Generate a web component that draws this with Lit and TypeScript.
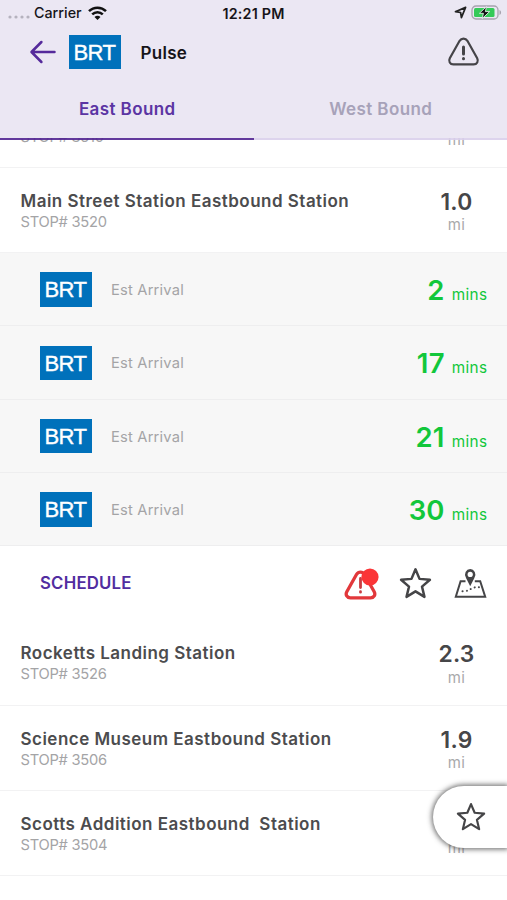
import { LitElement, html, css, svg } from "lit";
import { customElement, property } from "lit/decorators.js";

interface Stop {
  name: string;
  id: string;
  miles: string;
}

const starPath = "M16 2.2 L19.9 11.5 L30 12.4 L22.3 19 L24.7 29 L16 23.6 L7.3 29 L9.7 19 L2 12.4 L12.1 11.5 Z";
const trianglePath = "M12.6 3.8 C14.4 .9 18.6 .9 20.4 3.8 L30.2 21.2 C31.8 24.2 30 27.4 26.6 27.4 L6.4 27.4 C3 27.4 1.2 24.2 2.8 21.2 Z";

@customElement("route-badge")
class RouteBadge extends LitElement {
  static styles = css`
    :host {
      display: block;
      width: 51.5px;
      height: 34.5px;
      flex: none;
      background: #0071bb;
      color: #fff;
      font: 22px/36px "Liberation Sans", Arial, sans-serif;
      text-align: center;
      -webkit-text-stroke: 0.4px #fff;
      letter-spacing: -0.6px;
      text-indent: -0.6px;
    }
  `;
  render() {
    return html`BRT`;
  }
}

@customElement("stop-row")
class StopRow extends LitElement {
  @property({ attribute: false }) stop!: Stop;

  static styles = css`
    :host {
      display: flex;
      justify-content: space-between;
      box-sizing: border-box;
      height: 85.25px;
      padding: 23px 0 0 20.5px;
      border-bottom: 1px solid #f2f2f3;
      background: #fff;
    }
    .name {
      min-height: 21px;
      font-size: 17px;
      font-weight: 600;
      line-height: 21px;
      letter-spacing: 0.48px;
      color: #4c4c4e;
      white-space: pre;
    }
    .id {
      font-size: 14.7px;
      line-height: 20px;
      letter-spacing: -0.25px;
      color: #a4a4a6;
    }
    .distance {
      width: 101px;
      text-align: center;
    }
    .miles {
      min-height: 22px;
      font-size: 22.8px;
      font-weight: 600;
      line-height: 22px;
      letter-spacing: 0.2px;
      color: #464648;
    }
    .unit {
      font-size: 15px;
      line-height: 22px;
      letter-spacing: 0.4px;
      color: #a9a9ab;
      padding-top: 1.5px;
    }
  `;
  render() {
    return html`
      <div>
        <div class="name">${this.stop.name}</div>
        <div class="id">STOP# ${this.stop.id}</div>
      </div>
      <div class="distance">
        <div class="miles">${this.stop.miles}</div>
        <div class="unit">mi</div>
      </div>
    `;
  }
}

@customElement("arrival-row")
class ArrivalRow extends LitElement {
  @property() minutes = "";

  static styles = css`
    :host {
      display: flex;
      align-items: center;
      box-sizing: border-box;
      height: 73.3px;
      padding: 1px 19.5px 0 40px;
      border-bottom: 1px solid #eeeeef;
      background: #f7f7f7;
    }
    .label {
      margin-left: 19.5px;
      padding-top: 1px;
      flex: 1;
      font-size: 14.7px;
      letter-spacing: 0.2px;
      color: #a4a4a6;
    }
    .time {
      display: flex;
      align-items: baseline;
      gap: 7px;
      padding-top: 1px;
      color: #12c73b;
    }
    .minutes {
      font-size: 27.5px;
      font-weight: 600;
      letter-spacing: 0.2px;
    }
    .unit {
      font-size: 15.3px;
      font-weight: 400;
      letter-spacing: 0.4px;
    }
  `;
  render() {
    return html`
      <route-badge></route-badge>
      <div class="label">Est Arrival</div>
      <div class="time">
        <span class="minutes">${this.minutes}</span>
        <span class="unit">mins</span>
      </div>
    `;
  }
}

@customElement("app-root")
class AppRoot extends LitElement {
  static styles = css`
    :host {
      display: block;
      position: relative;
      width: 507px;
      height: 900px;
      overflow: hidden;
      background: #fff;
      font-family: Inter, "Noto Sans", sans-serif;
    }
    svg {
      display: block;
      flex: none;
    }
    .header {
      position: relative;
      z-index: 1;
      height: 140px;
      box-sizing: border-box;
    }
    .status {
      display: grid;
      grid-template-columns: 1fr auto 1fr;
      align-items: center;
      height: 26px;
      padding: 0 7px 0 8px;
      background: #ebe7f3;
      font-size: 14.3px;
      font-weight: 500;
      color: #161419;
    }
    .clock {
      font-weight: 600;
      letter-spacing: 0.2px;
      margin-right: 1px;
    }
    .carrier {
      display: flex;
      align-items: center;
      margin-top: -1px;
    }
    .carrier span {
      margin: 0 6px 0 4px;
    }
    .power {
      display: flex;
      justify-content: flex-end;
      align-items: center;
      gap: 4px;
      margin: -1px -1.5px 0 0;
    }
    .bar {
      display: flex;
      align-items: center;
      height: 52px;
      padding: 0 27px 0 29px;
      background: #ebe7f3;
    }
    .title {
      flex: 1;
      margin-left: 20px;
      padding-top: 1px;
      font-size: 17px;
      font-weight: 600;
      letter-spacing: 0.3px;
      color: #161419;
    }
    .bar route-badge {
      margin-left: 12px;
    }
    .tabs {
      display: grid;
      grid-template-columns: 1fr 1fr;
      height: 62px;
    }
    .tab {
      box-sizing: border-box;
      height: 62px;
      padding-left: 1px;
      text-align: center;
      font-size: 17px;
      font-weight: 600;
      line-height: 62.5px;
      letter-spacing: 0.4px;
      color: #a7a2b9;
      background: #ebe7f3;
      background-clip: padding-box;
      border-bottom: 2px solid #d9cfebe6;
    }
    .tab.active {
      color: #5b35a3;
      border-bottom-color: #512391e6;
    }
    .list {
      margin-top: -57.5px;
    }
    .actions {
      display: flex;
      align-items: center;
      height: 74.2px;
      padding: 0 20px 0 40px;
    }
    .schedule {
      flex: 1;
      font-size: 16.8px;
      font-weight: 600;
      color: #512da0;
      letter-spacing: 0.2px;
    }
    .icons {
      display: flex;
      align-items: center;
      gap: 22px;
    }
    .icons svg:first-child {
      margin-right: -2px;
    }
    .favorites {
      position: absolute;
      right: 0;
      top: 786px;
      width: 74px;
      height: 62px;
      box-sizing: border-box;
      padding: 16px 0 0 23px;
      border-radius: 31px 0 0 31px;
      background: #fff;
      box-shadow: 0 0 5px 1.5px #444b;
      z-index: 1;
    }
  `;

  private stopsBefore: Stop[] = [
    { name: "", id: "3510", miles: "" },
    { name: "Main Street Station Eastbound Station", id: "3520", miles: "1.0" },
  ];

  private stopsAfter: Stop[] = [
    { name: "Rocketts Landing Station", id: "3526", miles: "2.3" },
    { name: "Science Museum Eastbound Station", id: "3506", miles: "1.9" },
    { name: "Scotts Addition Eastbound  Station", id: "3504", miles: "" },
  ];

  private star(size: number, width: number) {
    return html`<svg width=${size} height=${size} viewBox="0 0 32 32" fill="none" stroke="#454547" stroke-width=${width} stroke-linejoin="round">
      ${svg`<path d=${starPath} />`}
    </svg>`;
  }

  render() {
    return html`
      <div class="header">
        <div class="status">
          <div class="carrier">
            <svg width="22" height="12" viewBox="0 0 22 12" fill="#b5b2be">
              <circle cx="2" cy="10" r="1.6" /><circle cx="8" cy="10" r="1.6" />
              <circle cx="14" cy="10" r="1.6" /><circle cx="20" cy="10" r="1.6" />
            </svg>
            <span>Carrier</span>
            <svg width="19" height="14" viewBox="0 0 19 14" fill="none" stroke="#111" stroke-width="2.5">
              <path d="M1 5.2 C5.7 .6 13.3 .6 18 5.2" />
              <path d="M4.2 8.4 C7.2 5.5 11.8 5.5 14.8 8.4" />
              <path d="M9.5 14 L6.5 11 C8.2 9.4 10.8 9.4 12.5 11 Z" fill="#111" stroke="none" />
            </svg>
          </div>
          <div class="clock">12:21 PM</div>
          <div class="power">
            <svg width="13" height="13" viewBox="0 0 13 13" fill="none" stroke="#222" stroke-width="1.7" stroke-linejoin="round">
              <path d="M11.6 1.4 L1.4 5.7 L6.6 6.5 L7.4 11.6 Z" />
            </svg>
            <svg width="31" height="15" viewBox="0 0 31 15">
              <rect x="1" y="1" width="26" height="13" rx="4" fill="none" stroke="#a7a3ae" stroke-width="1.3" />
              <rect x="3" y="3" width="20.5" height="9" rx="1.5" fill="#35ca59" />
              <path d="M28.5 5 C30.6 5.8 30.6 9.2 28.5 10 Z" fill="#a7a3ae" />
              <path d="M15.5 1.5 L8.4 8.3 L12.4 8.3 L11.2 13.6 L18.6 6.6 L14.4 6.6 Z" fill="#111" stroke="#e0f3e6" stroke-width="0.9" />
            </svg>
          </div>
        </div>
        <div class="bar">
          <svg width="28" height="26" viewBox="0 0 28 26" fill="none" stroke="#552a9b" stroke-width="2.5" stroke-linecap="round" stroke-linejoin="round">
            <path d="M12.4 3 L2.5 13 L12.4 23 M2.8 13 L25.5 13" />
          </svg>
          <route-badge></route-badge>
          <div class="title">Pulse</div>
          <svg width="33" height="30" viewBox="0 0 33 30" fill="none" stroke="#454448" stroke-width="2.2" stroke-linecap="round">
            <path d=${trianglePath} />
            <path d="M16.5 10 L16.5 17 M16.5 21.5 L16.5 21.7" stroke-width="3" />
          </svg>
        </div>
        <div class="tabs">
          <div class="tab active">East Bound</div>
          <div class="tab">West Bound</div>
        </div>
      </div>

      <div class="list">
        ${this.stopsBefore.map((s) => html`<stop-row .stop=${s}></stop-row>`)}
        ${["2", "17", "21", "30"].map((m) => html`<arrival-row minutes=${m}></arrival-row>`)}
        <div class="actions">
          <div class="schedule">SCHEDULE</div>
          <div class="icons">
            <svg width="35" height="33" viewBox="0 0 35 33" fill="none" stroke-linecap="round">
              <path d=${trianglePath} transform="translate(0 3.5)" stroke="#e2383b" stroke-width="3.3" />
              <path d="M16.5 11.5 L16.5 20.5 M16.5 24.7 L16.5 25.2" stroke="#c93c41" stroke-width="2.8" />
              <circle cx="26" cy="10" r="8.6" fill="#fb3537" />
            </svg>
            ${this.star(33, 2.4)}
            <svg width="33" height="33" viewBox="0 0 33 33" fill="none" stroke="#454547" stroke-width="2">
              <path d="M11.5 14.2 L6.6 14.2 L1.8 29.8 L31.2 29.8 L26.2 14.2 L20.8 14.2" />
              <path d="M16.2 17 L12.9 10.5 C10.6 6.8 13 3.1 16.2 3.1 C19.4 3.1 21.8 6.8 19.5 10.5 Z" fill="#454547" />
              <circle cx="16.2" cy="7.4" r="2.6" fill="#fff" stroke="none" />
              <path d="M8.5 24.2 C14 24.4 15 22.8 17.5 21.6 S22 19.8 25.5 20.2" stroke-linecap="round" stroke-dasharray="0.1 4.2" />
            </svg>
          </div>
        </div>
        ${this.stopsAfter.map((s) => html`<stop-row .stop=${s}></stop-row>`)}
      </div>

      <div class="favorites">${this.star(30, 2.3)}</div>
    `;
  }
}
